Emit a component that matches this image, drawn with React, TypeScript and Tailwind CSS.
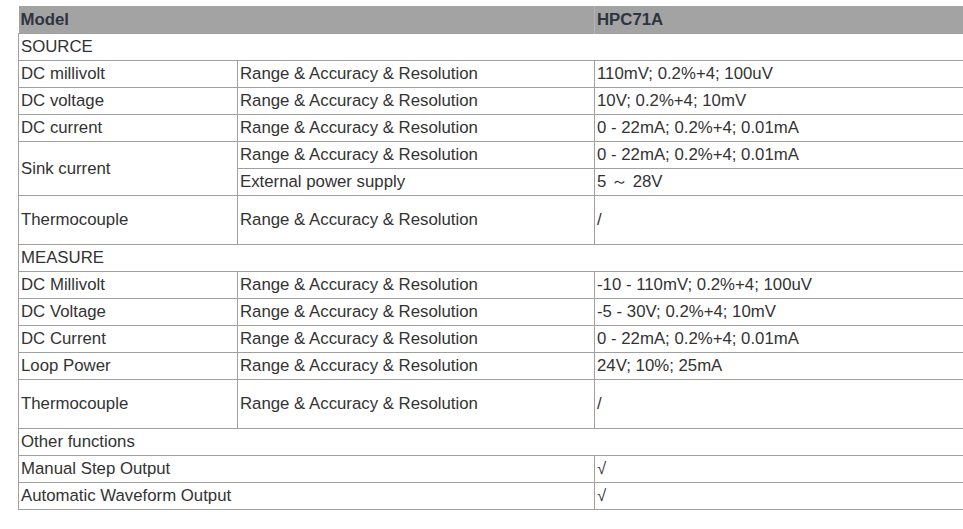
const rows: { label: string; param?: string; value?: string; section?: boolean; tall?: boolean; span?: boolean }[] = [
  { label: "SOURCE", section: true },
  { label: "DC millivolt", param: "Range & Accuracy & Resolution", value: "110mV; 0.2%+4; 100uV" },
  { label: "DC voltage", param: "Range & Accuracy & Resolution", value: "10V; 0.2%+4; 10mV" },
  { label: "DC current", param: "Range & Accuracy & Resolution", value: "0 - 22mA; 0.2%+4; 0.01mA" },
];

const measure = [
  { label: "DC Millivolt", value: "-10 - 110mV; 0.2%+4; 100uV" },
  { label: "DC Voltage", value: "-5 - 30V; 0.2%+4; 10mV" },
  { label: "DC Current", value: "0 - 22mA; 0.2%+4; 0.01mA" },
  { label: "Loop Power", value: "24V; 10%; 25mA" },
];

const td = "border border-[#a0a0a0] px-[2px] py-0 h-[27px] align-middle";
const tall = "border border-[#a0a0a0] px-[2px] py-0 h-[49px] align-middle";
const RAR = "Range & Accuracy & Resolution";

export default function App() {
  return (
    <div className="w-[963px] h-[529px] overflow-hidden bg-white pl-[18px] pt-[6px]" style={{ fontFamily: '"Liberation Sans", Arial, sans-serif' }}>
      <table className="w-[948px] border-collapse text-[16.8px] leading-[19px] text-[#333]">
        <colgroup>
          <col className="w-[219px]" />
          <col className="w-[357px]" />
          <col />
        </colgroup>
        <tbody>
          <tr className="bg-[#a3a3a3]">
            <td colSpan={2} className="h-[27px] px-[2px] font-bold text-[#2e3440]">Model</td>
            <td className="h-[27px] px-[2px] font-bold text-[#2e3440] border-l border-[#b4b4b4]">HPC71A</td>
          </tr>
          {rows.map((r) =>
            r.section ? (
              <tr key={r.label}>
                <td colSpan={3} className={td}>{r.label}</td>
              </tr>
            ) : (
              <tr key={r.label}>
                <td className={td}>{r.label}</td>
                <td className={td}>{r.param}</td>
                <td className={td}>{r.value}</td>
              </tr>
            )
          )}
          <tr>
            <td rowSpan={2} className={td}>Sink current</td>
            <td className={td}>{RAR}</td>
            <td className={td}>0 - 22mA; 0.2%+4; 0.01mA</td>
          </tr>
          <tr>
            <td className={td}>External power supply</td>
            <td className={td}>5 ～ 28V</td>
          </tr>
          <tr>
            <td className={tall}>Thermocouple</td>
            <td className={tall}>{RAR}</td>
            <td className={tall}>/</td>
          </tr>
          <tr>
            <td colSpan={3} className={td}>MEASURE</td>
          </tr>
          {measure.map((m) => (
            <tr key={m.label}>
              <td className={td}>{m.label}</td>
              <td className={td}>{RAR}</td>
              <td className={td}>{m.value}</td>
            </tr>
          ))}
          <tr>
            <td className={tall}>Thermocouple</td>
            <td className={tall}>{RAR}</td>
            <td className={tall}>/</td>
          </tr>
          <tr>
            <td colSpan={3} className={td}>Other functions</td>
          </tr>
          <tr>
            <td colSpan={2} className={td}>Manual Step Output</td>
            <td className={td}>√</td>
          </tr>
          <tr>
            <td colSpan={2} className={td}>Automatic Waveform Output</td>
            <td className={td}>√</td>
          </tr>
        </tbody>
      </table>
    </div>
  );
}
